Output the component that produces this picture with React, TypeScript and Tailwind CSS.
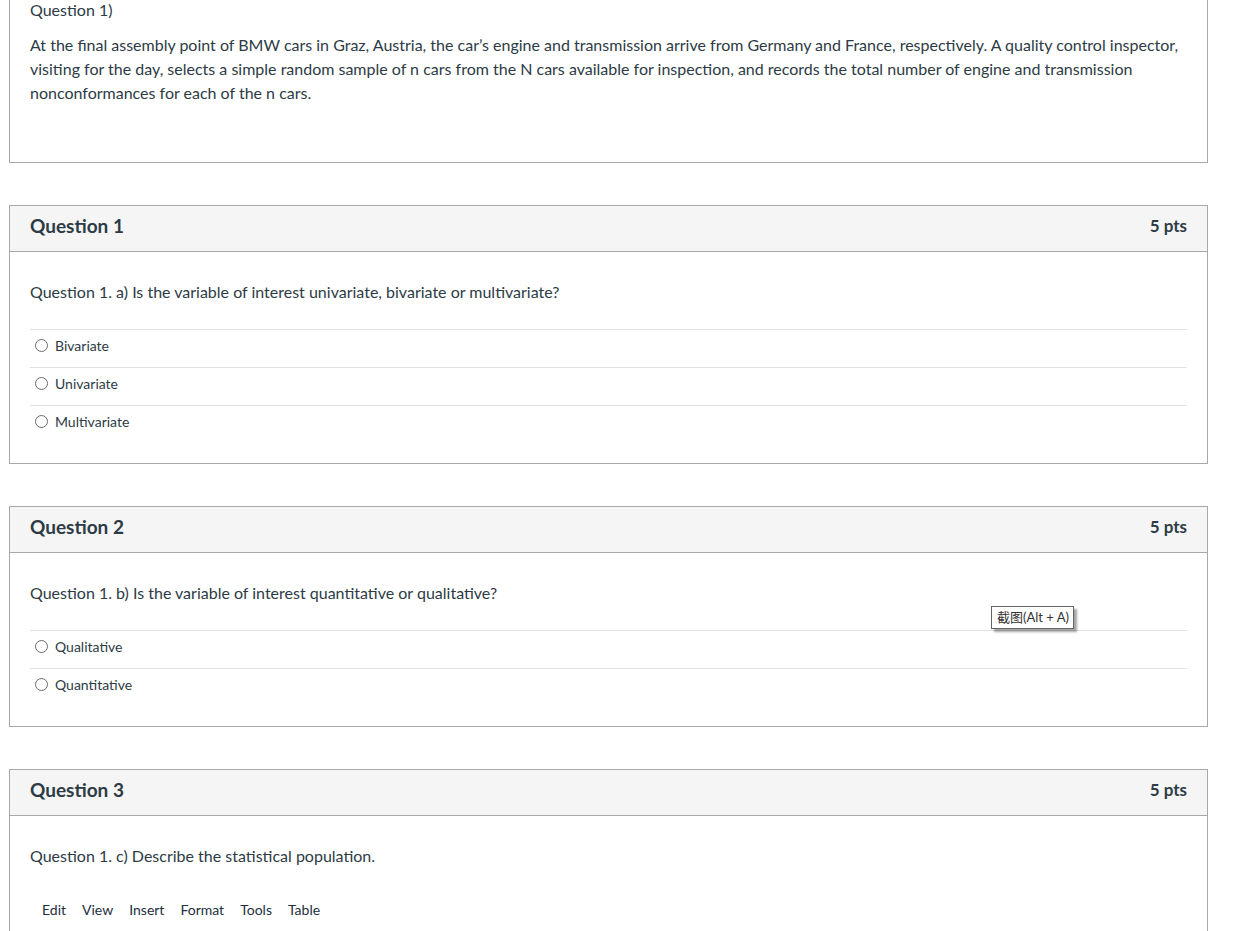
import React from "react";

const font = { fontFamily: "Lato, 'Noto Sans CJK SC', sans-serif" };

function Radio() {
  return (
    <span className="inline-block w-[13px] h-[13px] rounded-full border border-[#6b6b6b] bg-white shrink-0 mt-[2px]" />
  );
}

function Answers({ items }: { items: string[] }) {
  return (
    <div className="mt-[25px]">
      {items.map((t) => (
        <div key={t} className="border-t border-[#dfe1e3] h-[38px] flex items-start pt-[7px] pl-[5px] gap-[7px]">
          <Radio />
          <span className="text-[14px] leading-[18px] text-[#2d3b45]">{t}</span>
        </div>
      ))}
    </div>
  );
}

function QuestionCard({
  title,
  prompt,
  children,
  className = "",
}: {
  title: string;
  prompt: string;
  children?: React.ReactNode;
  className?: string;
}) {
  return (
    <div className={"border border-[#a8a8a8] " + className}>
      <div className="h-[46px] bg-[#f5f5f5] border-b border-[#a8a8a8] flex items-start justify-between px-5 pt-[8px]">
        <span className="text-[19px] leading-[24px] font-bold text-[#2d3b45]">{title}</span>
        <span className="text-[17px] leading-[24px] font-bold text-[#2d3b45]">5 pts</span>
      </div>
      <div className="px-5 pt-[28px] pb-[20px]">
        <div className="text-[16px] leading-[24px] text-[#2d3b45]">{prompt}</div>
        {children}
      </div>
    </div>
  );
}

export default function App() {
  return (
    <div className="bg-white w-[1240px] h-[931px] overflow-hidden relative" style={font}>
      <div className="ml-[9px] w-[1199px]">
        <div className="border-x border-b border-[#a8a8a8] px-5 h-[163px]">
          <div className="text-[16px] leading-[20px] text-[#2d3b45]">Question 1)</div>
          <p className="mt-[13px] text-[16px] leading-[24px] text-[#2d3b45]">
            At the final assembly point of BMW cars in Graz, Austria, the car’s engine and transmission arrive from Germany and France, respectively. A quality control inspector, visiting for the day, selects a simple random sample of n cars from the N cars available for inspection, and records the total number of engine and transmission nonconformances for each of the n cars.
          </p>
        </div>

        <QuestionCard
          className="mt-[42px]"
          title="Question 1"
          prompt="Question 1. a) Is the variable of interest univariate, bivariate or multivariate?"
        >
          <Answers items={["Bivariate", "Univariate", "Multivariate"]} />
        </QuestionCard>

        <QuestionCard
          className="mt-[42px]"
          title="Question 2"
          prompt="Question 1. b) Is the variable of interest quantitative or qualitative?"
        >
          <Answers items={["Qualitative", "Quantitative"]} />
        </QuestionCard>

        <QuestionCard
          className="mt-[42px]"
          title="Question 3"
          prompt="Question 1. c) Describe the statistical population."
        >
          <div className="mt-[32px] pl-3 flex gap-4 text-[14px] leading-[20px] text-[#222f3e]">
            <span>Edit</span>
            <span>View</span>
            <span>Insert</span>
            <span>Format</span>
            <span>Tools</span>
            <span>Table</span>
          </div>
          <div className="h-[200px]" />
        </QuestionCard>
      </div>

      <div className="absolute left-[991px] top-[606px] h-[23px] w-[83px] px-[5px] flex items-center border border-[#646464] bg-white text-[13px] text-[#333] shadow-[3px_3px_2px_rgba(0,0,0,0.35)] whitespace-nowrap">
        截图(Alt&nbsp;+&nbsp;A)
      </div>
    </div>
  );
}
